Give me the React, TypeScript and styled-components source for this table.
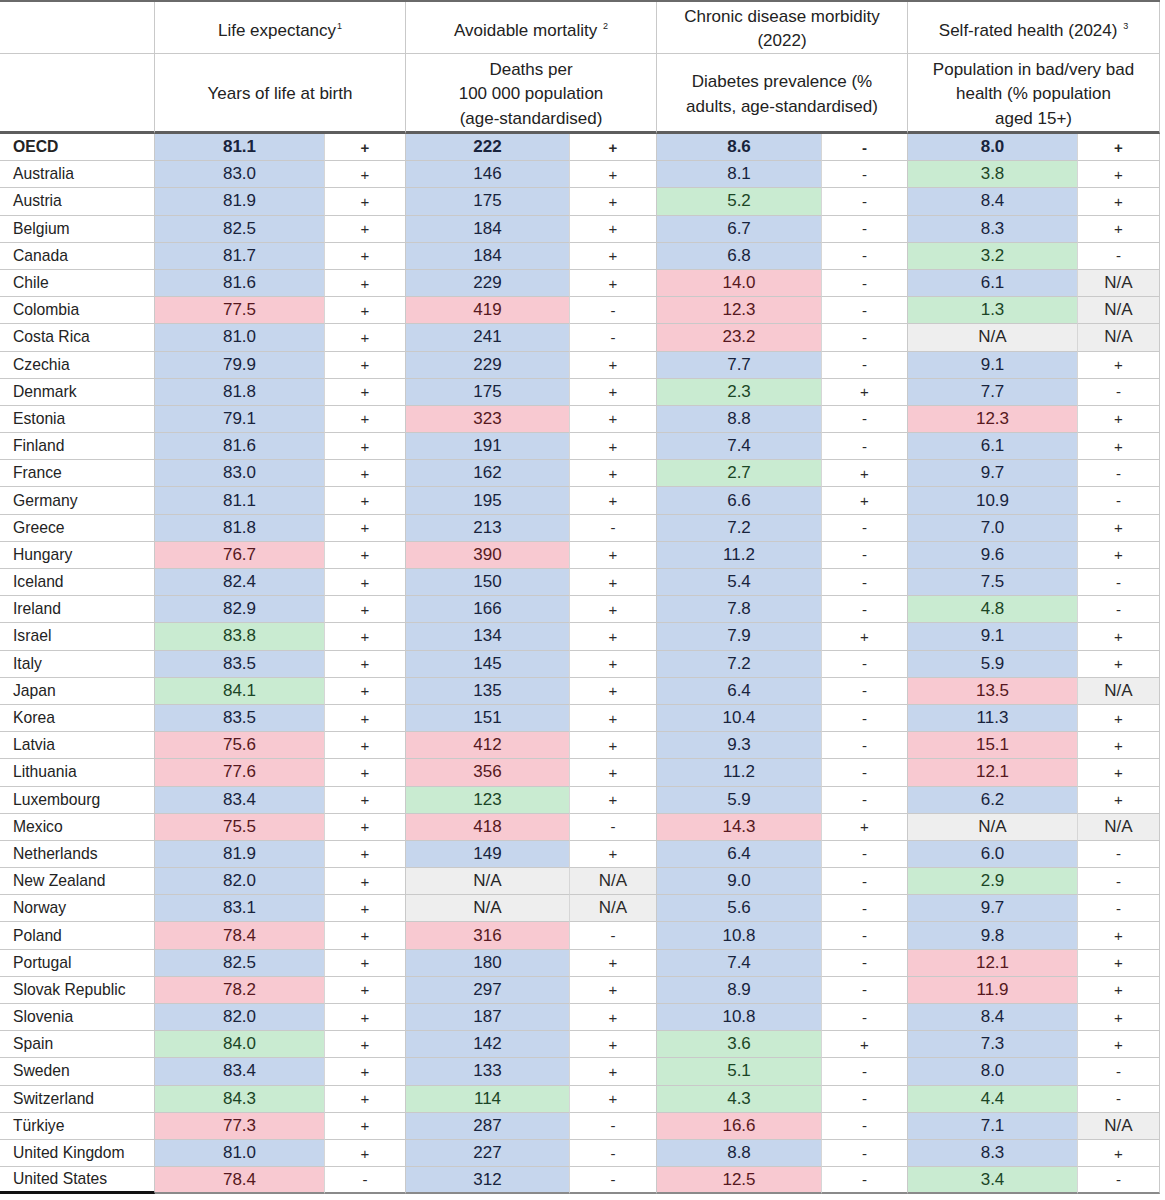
import React from "react";
import styled, { createGlobalStyle, css } from "styled-components";

const Global = createGlobalStyle`
  html, body { margin: 0; padding: 0; background: #ffffff; }
  body { font-family: "Liberation Sans Narrow", "Arial Narrow", "Liberation Sans", Arial, sans-serif; color: #222; }
`;

type Tone = "b" | "g" | "r" | "n";

const toneBg: Record<Tone, string> = {
  b: "#c6d6ed",
  g: "#c9ebd1",
  r: "#f8c9d1",
  n: "#eeeeee",
};
const toneFg: Record<Tone, string> = {
  b: "#18233c",
  g: "#1b4525",
  r: "#561820",
  n: "#262626",
};

const Table = styled.div`
  display: grid;
  width: 1160px;
  grid-template-columns: 155px 170px 81px 164px 87px 165px 86px 170px 82px;
  grid-template-rows: 52px 80px;
  grid-auto-rows: 27.2px;
  border-top: 2px solid #6a6a6a;
  font-size: 17px;
`;

const HeadCell = styled.div<{ $span?: number; $low?: boolean }>`
  grid-column: span ${(p) => p.$span ?? 2};
  display: flex;
  align-items: center;
  justify-content: center;
  text-align: center;
  line-height: 24.5px;
  color: #222;
  border-right: 1px solid #c9c9c9;
  border-bottom: ${(p) => (p.$low ? "3px solid #5e5e5e" : "1px solid #c9c9c9")};
  ${(p) =>
    p.$low
      ? css`
          padding-top: 4px;
        `
      : css`
          padding-top: 3px;
        `}
`;

const Sup = styled.span`
  font-size: 9px;
  vertical-align: 7px;
  margin-left: 1px;
`;

const CountryCell = styled.div<{ $bold?: boolean; $last?: boolean }>`
  display: flex;
  align-items: center;
  padding-left: 13px;
  font-size: 15.7px;
  font-weight: ${(p) => (p.$bold ? 700 : 400)};
  color: #232323;
  border-right: 1px solid #c9c9c9;
  border-bottom: ${(p) => (p.$last ? "3px solid #111" : "1px solid #c9c9c9")};
`;

const ValueCell = styled.div<{ $tone: Tone; $bold?: boolean; $last?: boolean }>`
  display: flex;
  align-items: center;
  justify-content: center;
  background: ${(p) => toneBg[p.$tone]};
  color: ${(p) => toneFg[p.$tone]};
  font-weight: ${(p) => (p.$bold ? 700 : 400)};
  border-right: 1px solid #d6d6d6;
  border-bottom: ${(p) => (p.$last ? "2px solid #8a8a8a" : "1px solid #c9c9c9")};
`;

const SignCell = styled.div<{ $na?: boolean; $bold?: boolean; $last?: boolean }>`
  display: flex;
  align-items: center;
  justify-content: center;
  background: ${(p) => (p.$na ? "#eeeeee" : "#ffffff")};
  color: #2a2a2a;
  font-size: ${(p) => (p.$na ? "17px" : "15px")};
  font-weight: ${(p) => (p.$bold ? 700 : 400)};
  border-right: 1px solid #c9c9c9;
  border-bottom: ${(p) => (p.$last ? "2px solid #8a8a8a" : "1px solid #c9c9c9")};
`;

type Row = [string, string, Tone, string, string, Tone, string, string, Tone, string, string, Tone, string];

const rows: Row[] = [
  ["OECD", "81.1", "b", "+", "222", "b", "+", "8.6", "b", "-", "8.0", "b", "+"],
  ["Australia", "83.0", "b", "+", "146", "b", "+", "8.1", "b", "-", "3.8", "g", "+"],
  ["Austria", "81.9", "b", "+", "175", "b", "+", "5.2", "g", "-", "8.4", "b", "+"],
  ["Belgium", "82.5", "b", "+", "184", "b", "+", "6.7", "b", "-", "8.3", "b", "+"],
  ["Canada", "81.7", "b", "+", "184", "b", "+", "6.8", "b", "-", "3.2", "g", "-"],
  ["Chile", "81.6", "b", "+", "229", "b", "+", "14.0", "r", "-", "6.1", "b", "N/A"],
  ["Colombia", "77.5", "r", "+", "419", "r", "-", "12.3", "r", "-", "1.3", "g", "N/A"],
  ["Costa Rica", "81.0", "b", "+", "241", "b", "-", "23.2", "r", "-", "N/A", "n", "N/A"],
  ["Czechia", "79.9", "b", "+", "229", "b", "+", "7.7", "b", "-", "9.1", "b", "+"],
  ["Denmark", "81.8", "b", "+", "175", "b", "+", "2.3", "g", "+", "7.7", "b", "-"],
  ["Estonia", "79.1", "b", "+", "323", "r", "+", "8.8", "b", "-", "12.3", "r", "+"],
  ["Finland", "81.6", "b", "+", "191", "b", "+", "7.4", "b", "-", "6.1", "b", "+"],
  ["France", "83.0", "b", "+", "162", "b", "+", "2.7", "g", "+", "9.7", "b", "-"],
  ["Germany", "81.1", "b", "+", "195", "b", "+", "6.6", "b", "+", "10.9", "b", "-"],
  ["Greece", "81.8", "b", "+", "213", "b", "-", "7.2", "b", "-", "7.0", "b", "+"],
  ["Hungary", "76.7", "r", "+", "390", "r", "+", "11.2", "b", "-", "9.6", "b", "+"],
  ["Iceland", "82.4", "b", "+", "150", "b", "+", "5.4", "b", "-", "7.5", "b", "-"],
  ["Ireland", "82.9", "b", "+", "166", "b", "+", "7.8", "b", "-", "4.8", "g", "-"],
  ["Israel", "83.8", "g", "+", "134", "b", "+", "7.9", "b", "+", "9.1", "b", "+"],
  ["Italy", "83.5", "b", "+", "145", "b", "+", "7.2", "b", "-", "5.9", "b", "+"],
  ["Japan", "84.1", "g", "+", "135", "b", "+", "6.4", "b", "-", "13.5", "r", "N/A"],
  ["Korea", "83.5", "b", "+", "151", "b", "+", "10.4", "b", "-", "11.3", "b", "+"],
  ["Latvia", "75.6", "r", "+", "412", "r", "+", "9.3", "b", "-", "15.1", "r", "+"],
  ["Lithuania", "77.6", "r", "+", "356", "r", "+", "11.2", "b", "-", "12.1", "r", "+"],
  ["Luxembourg", "83.4", "b", "+", "123", "g", "+", "5.9", "b", "-", "6.2", "b", "+"],
  ["Mexico", "75.5", "r", "+", "418", "r", "-", "14.3", "r", "+", "N/A", "n", "N/A"],
  ["Netherlands", "81.9", "b", "+", "149", "b", "+", "6.4", "b", "-", "6.0", "b", "-"],
  ["New Zealand", "82.0", "b", "+", "N/A", "n", "N/A", "9.0", "b", "-", "2.9", "g", "-"],
  ["Norway", "83.1", "b", "+", "N/A", "n", "N/A", "5.6", "b", "-", "9.7", "b", "-"],
  ["Poland", "78.4", "r", "+", "316", "r", "-", "10.8", "b", "-", "9.8", "b", "+"],
  ["Portugal", "82.5", "b", "+", "180", "b", "+", "7.4", "b", "-", "12.1", "r", "+"],
  ["Slovak Republic", "78.2", "r", "+", "297", "b", "+", "8.9", "b", "-", "11.9", "r", "+"],
  ["Slovenia", "82.0", "b", "+", "187", "b", "+", "10.8", "b", "-", "8.4", "b", "+"],
  ["Spain", "84.0", "g", "+", "142", "b", "+", "3.6", "g", "+", "7.3", "b", "+"],
  ["Sweden", "83.4", "b", "+", "133", "b", "+", "5.1", "g", "-", "8.0", "b", "-"],
  ["Switzerland", "84.3", "g", "+", "114", "g", "+", "4.3", "g", "-", "4.4", "g", "-"],
  ["Türkiye", "77.3", "r", "+", "287", "b", "-", "16.6", "r", "-", "7.1", "b", "N/A"],
  ["United Kingdom", "81.0", "b", "+", "227", "b", "-", "8.8", "b", "-", "8.3", "b", "+"],
  ["United States", "78.4", "r", "-", "312", "b", "-", "12.5", "r", "-", "3.4", "g", "-"],
];

export default function App() {
  return (
    <>
      <Global />
      <Table>
        <HeadCell $span={1} />
        <HeadCell>
          <span>
            Life expectancy<Sup>1</Sup>
          </span>
        </HeadCell>
        <HeadCell>
          <span>
            Avoidable mortality <Sup>2</Sup>
          </span>
        </HeadCell>
        <HeadCell>
          <span>
            Chronic disease morbidity
            <br />
            (2022)
          </span>
        </HeadCell>
        <HeadCell>
          <span>
            Self-rated health (2024) <Sup>3</Sup>
          </span>
        </HeadCell>

        <HeadCell $span={1} $low />
        <HeadCell $low>Years of life at birth</HeadCell>
        <HeadCell $low>
          <span>
            Deaths per
            <br />
            100 000 population
            <br />
            (age-standardised)
          </span>
        </HeadCell>
        <HeadCell $low>
          <span>
            Diabetes prevalence (%
            <br />
            adults, age-standardised)
          </span>
        </HeadCell>
        <HeadCell $low>
          <span>
            Population in bad/very bad
            <br />
            health (% population
            <br />
            aged 15+)
          </span>
        </HeadCell>

        {rows.map((r, i) => {
          const bold = i === 0;
          const last = i === rows.length - 1;
          const groups = [
            [r[1], r[2], r[3]],
            [r[4], r[5], r[6]],
            [r[7], r[8], r[9]],
            [r[10], r[11], r[12]],
          ] as [string, Tone, string][];
          return (
            <React.Fragment key={r[0]}>
              <CountryCell $bold={bold} $last={last}>
                {r[0]}
              </CountryCell>
              {groups.map(([v, t, s], j) => (
                <React.Fragment key={j}>
                  <ValueCell $tone={t} $bold={bold} $last={last}>
                    {v}
                  </ValueCell>
                  <SignCell $na={s === "N/A"} $bold={bold} $last={last}>
                    {s}
                  </SignCell>
                </React.Fragment>
              ))}
            </React.Fragment>
          );
        })}
      </Table>
    </>
  );
}
